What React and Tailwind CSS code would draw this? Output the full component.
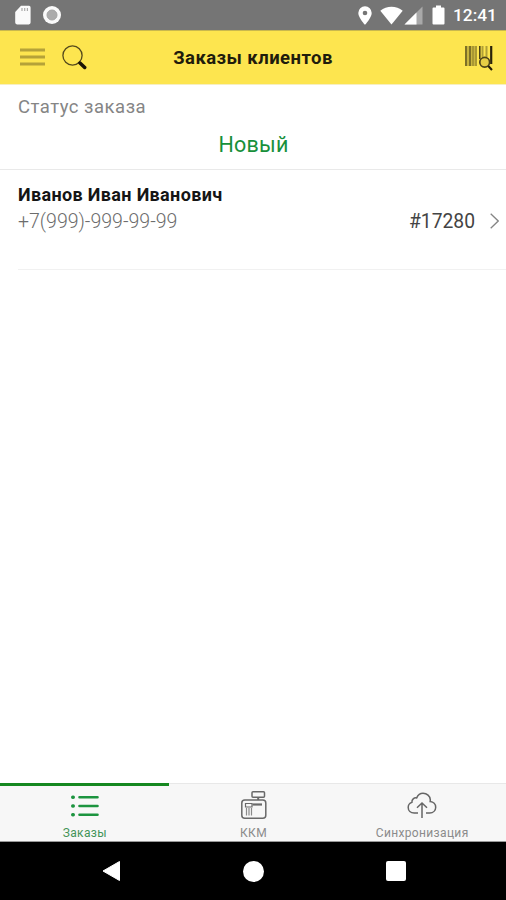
const tabs = [
  { id: 'orders', label: 'Заказы', icon: OrdersIcon, active: true },
  { id: 'kkm', label: 'ККМ', icon: RegisterIcon },
  { id: 'sync', label: 'Синхронизация', icon: CloudIcon },
]

const orders = [{ id: 17280, name: 'Иванов Иван Иванович', phone: '+7(999)-999-99-99' }]

function StatusBar() {
  return (
    <div className="flex h-[30px] shrink-0 items-center justify-between bg-[#757575] pr-[10px] pl-[15px] text-white">
      <div className="flex items-center gap-3">
        <svg className="h-5 w-4" viewBox="0 0 16 20">
          <path d="M6 .8h8A1.6 1.6 0 0 1 15.6 2.4v15.200A1.8 1.8 0 0 1 13.800 19.400H2A1.800 1.800 0 0 1 .2 17.600V7z" fill="#fafafa" />
          <path d="M7 3v3M9.700 3v3M12.400 3v3" stroke="#aaa" strokeWidth="1.200" />
        </svg>
        <svg className="size-[18px]" viewBox="0 0 18 18">
          <circle cx="9" cy="9" r="9" fill="#fafafa" />
          <circle cx="9" cy="9" r="5" fill="#acacac" stroke="#a4a4a4" />
        </svg>
      </div>
      <div className="flex items-center">
        <svg className="h-[19px] w-[14px]" viewBox="0 0 14 19">
          <path d="M7 .3A6.700 6.700 0 0 0 .3 7c0 4.800 6.700 11.800 6.700 11.800S13.700 11.800 13.700 7A6.700 6.700 0 0 0 7 .3z" fill="#fff" />
          <circle cx="7" cy="7" r="2.300" fill="#757575" />
        </svg>
        <svg className="ml-2 h-[19px] w-[23px]" viewBox="0 0 23 19">
          <path d="M.3 4.800C6.500-.6 16.500-.6 22.700 4.800L11.500 18.500z" fill="#fff" />
        </svg>
        <svg className="ml-[1px] h-[19px] w-[19px]" viewBox="0 0 19 19">
          <path d="M18.500.5v18H.5z" fill="#a9a9a9" />
          <path d="M12.500 6.500v12H.5z" fill="#fff" />
        </svg>
        <svg className="ml-[9px] h-5 w-[13px]" viewBox="0 0 13 20">
          <path d="M4 .5h5v2h2.500q1 0 1 1v15q0 1-1 1h-10q-1 0-1-1v-15q0-1 1-1H4z" fill="#fff" />
        </svg>
        <span className="ml-2 w-[43px] pt-[2px] text-[17.300px] leading-none font-medium whitespace-nowrap">12:41</span>
      </div>
    </div>
  )
}

function Header() {
  return (
    <header className="grid h-[54px] shrink-0 grid-cols-[1fr_auto_1fr] items-center border-t border-[#c9b84e] bg-[#fde54f] px-[13px]">
      <div className="flex items-center pl-[7px]">
        <svg className="-mt-[2px] h-[18px] w-[25px]" viewBox="0 0 25 18">
          <path d="M0 2h25M0 9h25M0 16h25" stroke="#b5a238" strokeWidth="3" />
        </svg>
        <svg className="-mt-[1px] ml-[17px] size-[25px]" viewBox="0 0 25 25">
          <circle cx="10.500" cy="10.500" r="9.600" fill="none" stroke="#54491c" strokeWidth="1.300" />
          <path d="M17 17l1.500 1.500" stroke="#221d0a" strokeWidth="1.500" />
          <path d="M18 18l4.700 4.500" stroke="#1b1505" strokeWidth="3.500" strokeLinecap="round" />
        </svg>
      </div>
      <h1 className="pt-[3px] text-[18.500px] font-bold tracking-[0.45px] text-[#1f1c0c]">Заказы клиентов</h1>
      <svg className="h-[26px] w-7 justify-self-end" viewBox="0 0 28 26">
        <path d="M0 1h12v20H0z" fill="#c9b53e" />
        <path d="M1 1v20M5 1v20" stroke="#7d7027" strokeWidth="2" />
        <path d="M8 1v20M11 1v20" stroke="#94852e" strokeWidth="1.200" />
        <path d="M14.800 1v13" stroke="#4a4118" strokeWidth="1.600" />
        <path d="M17.500 1v11M21.500 1v11" stroke="#b09f37" strokeWidth="2" />
        <path d="M26.200 1v18" stroke="#29230b" strokeWidth="2.200" />
        <circle cx="19.700" cy="17.300" r="4.900" fill="#e7ce45" stroke="#4d431a" strokeWidth="1.700" />
        <path d="M23.300 21l3.700 4" stroke="#241d08" strokeWidth="2.100" />
      </svg>
    </header>
  )
}

function OrderRow({ order }) {
  return (
    <li className="ml-[18px] flex h-[100px] justify-between border-b border-[#f1f1f1] pt-[13px] pr-[7px]">
      <div>
        <p className="text-[18px] leading-6 font-bold tracking-[0.35px] text-[#151515]">{order.name}</p>
        <p className="mt-[2px] text-[19.500px] leading-[26px] font-light text-[#6c6c6c]">{order.phone}</p>
      </div>
      <div className="flex items-center gap-[15px] self-start pt-[26px] text-[19.300px] leading-[26px] text-[#444]">
        <span>#{order.id}</span>
        <svg className="-mt-[2px] h-4 w-[9px]" viewBox="0 0 9 16">
          <path d="M.7.7L8.200 8 .7 15.300" fill="none" stroke="#858585" strokeWidth="1.300" />
        </svg>
      </div>
    </li>
  )
}

function OrdersIcon() {
  return (
    <svg className="h-7 w-[30px]" viewBox="0 0 30 28" stroke="#1c943f" strokeWidth="2.600" strokeLinecap="round">
      <path d="M10.500 6.300h18M10.500 15h18M10.500 23.800h18" />
      <path d="M3.700 6.300h.6M3.700 15h.6M3.700 23.800h.6" strokeWidth="3.400" />
    </svg>
  )
}

function RegisterIcon() {
  return (
    <svg className="h-7 w-[30px]" viewBox="0 0 30 28" fill="none" stroke="#696969" strokeWidth="1.500">
      <rect x="14" y=".8" width="12.500" height="5.500" rx="1" />
      <path d="M20.200 6.500V9" strokeWidth="2" />
      <rect x="3.800" y="9" width="24" height="18.200" rx="3" />
      <path d="M7.500 12.500h6.500v3.500H7.500z" strokeWidth="1.200" />
      <path d="M14.500 13.500h9.500" strokeWidth="2.200" />
      <path d="M8.500 17v7.500M11 17v7.500M13.500 17v7.500" stroke="#8a8a8a" strokeWidth="1.200" />
    </svg>
  )
}

function CloudIcon() {
  return (
    <svg className="h-7 w-[30px]" viewBox="0 0 30 28" fill="none" stroke="#666" strokeWidth="1.500">
      <path d="M11 22H7.200C3.600 22 1.200 19.600 1.200 16.500c0-2.600 1.500-4.400 3.700-5.100C4.700 8.500 7 6.300 9.700 6.900 11 3.900 13.200 2.300 16 2.300c4 0 7 2.800 7.300 6.300 0 .7 0 1.400-.1 1.900 3.200.3 5.500 2.700 5.500 5.700 0 3.300-2.500 5.800-6 5.800H19" />
      <path d="M15 27V12.500M10 16.800l5-4.800 5 4.800" />
    </svg>
  )
}

function TabBar() {
  return (
    <nav className="grid h-[59px] shrink-0 grid-cols-3 border-b border-[#999] bg-[#f7f7f7]">
      {tabs.map(({ id, label, icon: Icon, active }) => (
        <div
          key={id}
          className={`flex flex-col items-center ${
            active ? 'border-t-[3px] border-[#168820] pt-[5px] text-[#439458]' : 'border-t border-[#e8e8e8] pt-[7px] text-[#8b8b8b]'
          }`}
        >
          <Icon />
          <span className="mt-[7px] pl-[1px] text-[12px] leading-[14px] tracking-[0.35px]">{label}</span>
        </div>
      ))}
    </nav>
  )
}

function SystemNav() {
  return (
    <div className="flex h-[58px] shrink-0 items-center justify-between bg-black pr-[100px] pl-[102px]">
      <svg className="h-[22px] w-[19px]" viewBox="0 0 19 22">
        <path d="M17.500 1.500v19L1 11z" fill="#fff" stroke="#fff" strokeLinejoin="round" />
      </svg>
      <div className="size-[21px] rounded-full bg-white" />
      <div className="size-5 rounded-[2px] bg-white" />
    </div>
  )
}

export default function App() {
  return (
    <div className="flex h-screen flex-col overflow-hidden bg-white font-['Roboto',sans-serif]">
      <StatusBar />
      <Header />
      <section className="h-[86px] shrink-0 border-t border-b border-t-[#f7efc0] border-b-[#e9e9e9] px-[18px] pt-[10px]">
        <p className="text-[18.500px] leading-6 tracking-[0.5px] text-[#858585]">Статус заказа</p>
        <p className="mt-3 pl-[1px] text-center text-[21.500px] leading-[28px] tracking-[0.2px] text-[#17903a]">Новый</p>
      </section>
      <ul className="flex-1">
        {orders.map((order) => (
          <OrderRow key={order.id} order={order} />
        ))}
      </ul>
      <TabBar />
      <SystemNav />
    </div>
  )
}
